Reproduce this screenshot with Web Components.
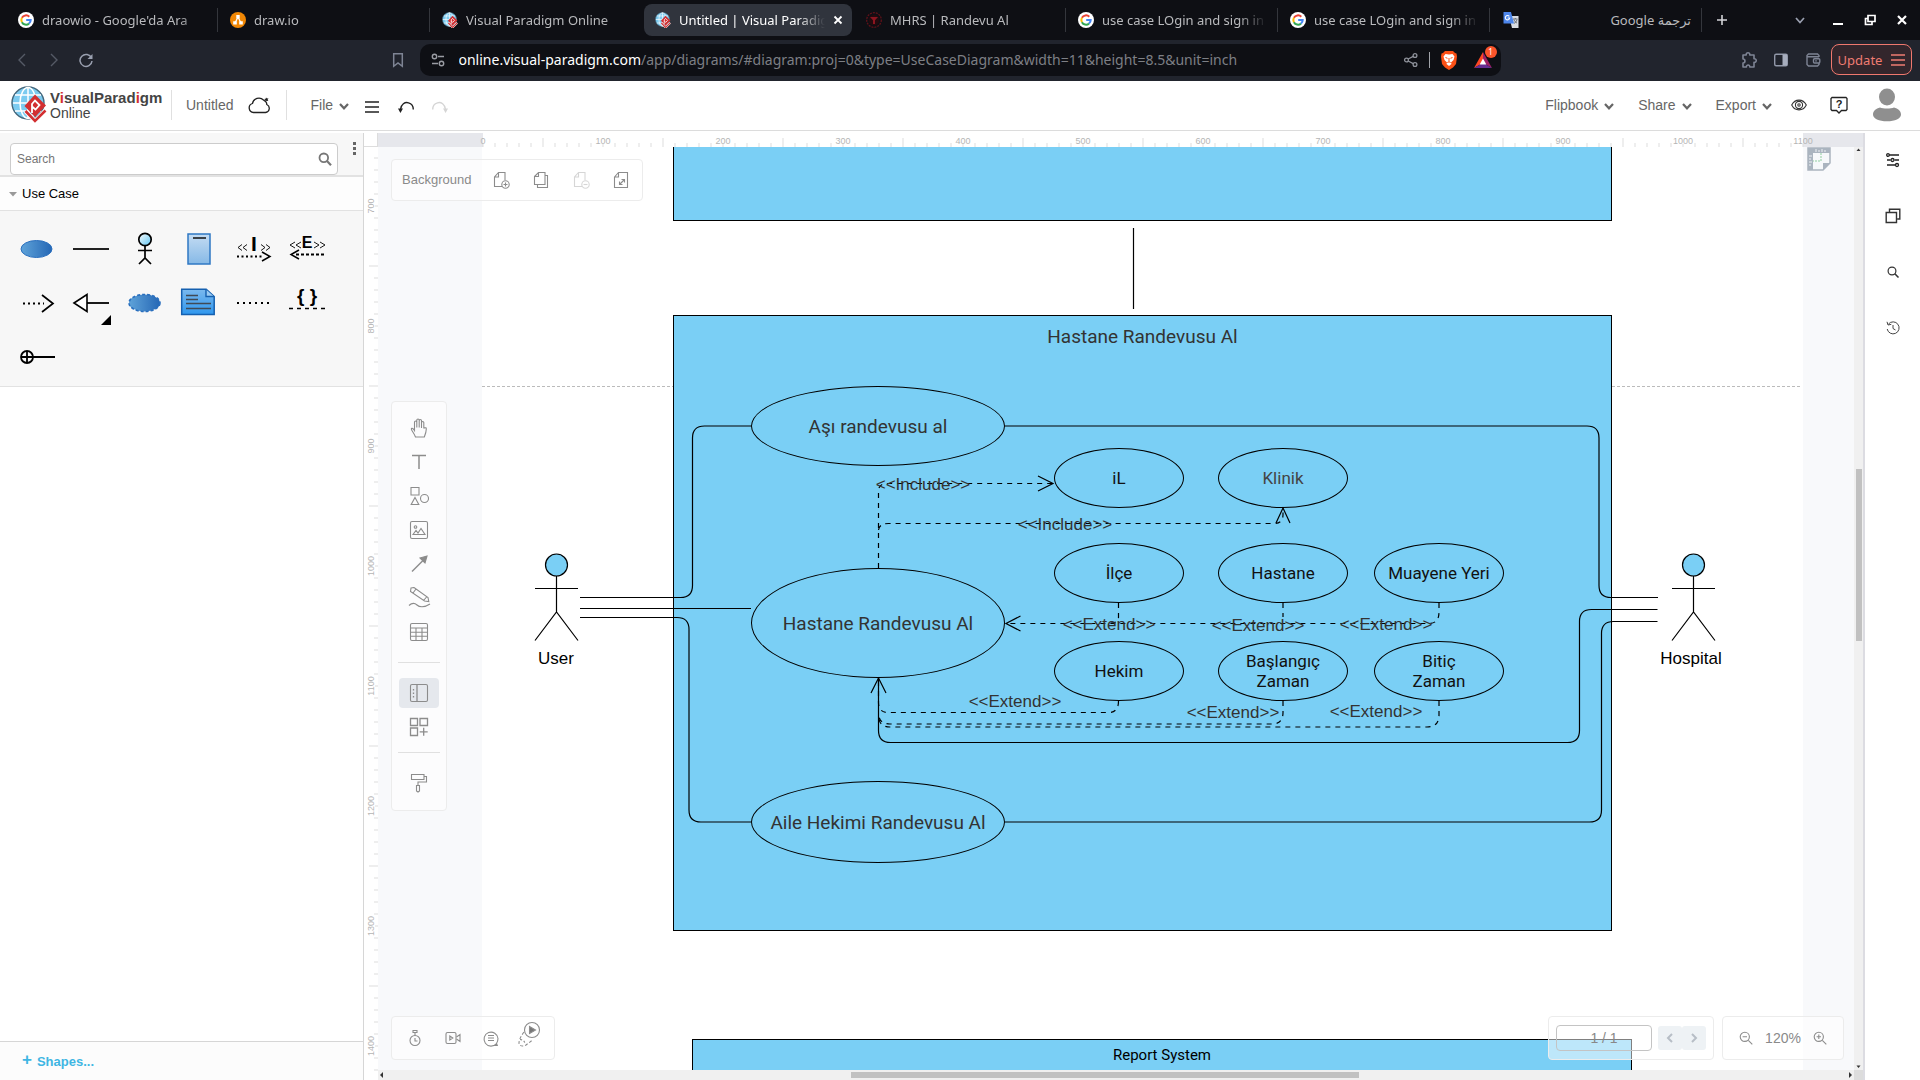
<!DOCTYPE html>
<html lang="en">
<head>
<meta charset="utf-8">
<title>Untitled | Visual Paradigm Online</title>
<style>
  html, body { margin: 0; height: 100%; }
  body { font-family: "Liberation Sans", Arial, sans-serif; overflow: hidden; background: #fff; }
</style>
</head>
<body>
<vp-window></vp-window>
<script>
const G_LOGO = `<circle cx="8" cy="8" r="8" fill="#fff"/>
  <path d="M3.9 5.8A4.7 4.7 0 0 1 11.3 4.7" stroke="#ea4335" stroke-width="2" fill="none"/>
  <path d="M3.9 5.8A4.8 4.8 0 0 0 3.9 10.2" stroke="#fbbc05" stroke-width="2" fill="none"/>
  <path d="M3.9 10.2A4.7 4.7 0 0 0 11 11.6" stroke="#34a853" stroke-width="2" fill="none"/>
  <path d="M11 11.6A4.7 4.7 0 0 0 12.7 8H8.2" stroke="#4285f4" stroke-width="2" fill="none"/>`;
const VP_GLOBE = `<circle cx="17" cy="17" r="16" fill="#7ccbf0" stroke="#44677c" stroke-width="1.4"/>
  <g stroke="#fff" stroke-width="1.5" fill="none"><ellipse cx="17" cy="17" rx="8" ry="15.4"/><path d="M17 1.5v31M2 17h30M4 9h26M4 25h26"/></g>
  <path d="M24 8.500l11 11L24 31 13.500 20z" fill="#d22f31"/>
  <path d="M14.500 25L24 35l10.500-10.500" fill="none" stroke="#fff" stroke-width="4.500"/>
  <path d="M14.500 25L24 35l10.500-10.500" fill="none" stroke="#d22f31" stroke-width="2.600"/>
  <path d="M21 27v-9l3-3.500 4.500 4.500-4 4.500-3.500-3" fill="none" stroke="#fff" stroke-width="1.800"/>`;

/* name: [width, height, markup] */
const ICONS = {
  google: [16, 16, G_LOGO],
  drawio: [16, 16, `<circle cx="8" cy="8" r="8" fill="#f08705"/><path d="M8 5L5 11M8 5l3 6" stroke="#fff" stroke-width="1.200"/><path d="M6.300 3h3.400v3.400H6.300zM3.200 9.300h3.600v3.200H3.200zM9.200 9.300h3.600v3.200H9.200z" fill="#fff"/>`],
  vpsmall: [16, 16, `<g transform="scale(.44)">${VP_GLOBE}</g>`],
  mhrs: [16, 16, `<circle cx="8" cy="8" r="7.300" fill="none" stroke="#5f1119" stroke-width="1.300" stroke-dasharray="2 1"/><circle cx="8" cy="8" r="5.200" fill="#240a0e"/><path d="M4 5h8L9 8.200V12H7V8.200z" fill="#8c1520"/>`],
  translate: [18, 18, `<path d="M7 5h9.500v12H10z" fill="#d9dde3"/><path d="M1.500 1h7.500l3 11.500H1.500z" fill="#4d86ec"/><path d="M7.300 5.400A2.200 2.200 0 1 0 7.700 7H5.700" fill="none" stroke="#fff" stroke-width="1.100"/><path d="M11 8h4.500M13.300 7v1M12 8.500c.5 2 2 3 3 3.500M15 8.500c-.5 2-2 3.500-3 4" stroke="#6a7078" fill="none"/>`],
  close: [10, 10, `<path d="M1.500 1.500l7 7M8.500 1.500l-7 7" stroke="currentColor" stroke-width="1.800"/>`],
  plus: [12, 12, `<path d="M6 1v10M1 6h10" stroke="currentColor" stroke-width="1.600"/>`],
  down: [12, 12, `<path d="M2 4l4 4.500L10 4" fill="none" stroke="currentColor" stroke-width="1.700"/>`],
  min: [12, 12, `<path d="M1 10h10" stroke="#fff" stroke-width="2"/>`],
  restore: [12, 12, `<path d="M4 1.500h7v6H4zM4 4.500H1.500v6H8V8" fill="none" stroke="#fff" stroke-width="1.700"/>`],
  winclose: [12, 12, `<path d="M2 2l8 8M10 2l-8 8" stroke="#fff" stroke-width="2.200"/>`],
  back: [16, 16, `<path d="M11 2L5 8l6 6" fill="none" stroke="#555a66" stroke-width="1.400"/>`],
  fwd: [16, 16, `<path d="M5 2l6 6-6 6" fill="none" stroke="#555a66" stroke-width="1.400"/>`],
  reload: [16, 16, `<path d="M13.500 6A6 6 0 1 0 14 9" fill="none" stroke="#9aa0b0" stroke-width="1.500"/><path d="M14.500 2v5H9.500z" fill="#9aa0b0"/>`],
  bookmark: [16, 16, `<path d="M3.700 1.700h8.600v12.600L8 11l-4.300 3.300z" fill="none" stroke="#7e8494" stroke-width="1.500"/>`],
  tune: [16, 16, `<g fill="none" stroke="#9a9ca3" stroke-width="1.400"><circle cx="4.500" cy="4.500" r="2.200"/><circle cx="11.500" cy="11.500" r="2.200"/><path d="M8 4.500h6M2 11.500h6"/></g>`],
  share: [16, 16, `<g fill="none" stroke="#8f929b" stroke-width="1.300"><circle cx="3.500" cy="8" r="1.900"/><circle cx="12" cy="3.500" r="1.900"/><circle cx="12" cy="12.500" r="1.900"/><path d="M5.200 7l5-2.600M5.200 9l5 2.600"/></g>`],
  brave: [18, 20, `<path d="M5 1h8l2 2 1.500.5.500 3-1 7.500-3 3.500-4 2.500-4-2.500L2 14 1 6.500l.5-3L3 3z" fill="#fb5016"/><path d="M5.500 4l3.500.6 3.500-.6 2 2.500-1 3.500-2.500 2.500.5 1.500L9 16l-2.500-2 .5-1.500L4.500 10l-1-3.500z" fill="#fff"/><path d="M5.500 7.500l2 .8M12.500 7.500l-2 .8M9 8v3.500M7.300 12.500L9 11.800l1.700.7" stroke="#fb5016" fill="none"/>`],
  bat: [18, 16, `<path d="M9 0L0 16l9-5.300z" fill="#ff4724"/><path d="M9 0l9 16-9-5.300z" fill="#9e1f63"/><path d="M0 16h18l-9-5.300z" fill="#662d91"/><path d="M9 6.500l-3.300 6h6.600z" fill="#fff"/>`],
  puzzle: [18, 18, `<path d="M3 4h3.200C5.800 1 10.200 1 9.800 4H14v3.800c3-.4 3 4 0 3.600V16H9.800c.2-2.600-3.600-2.600-3.400 0H3v-4c2.600-.2 2.600-4 0-4z" fill="none" stroke="#7e8494" stroke-width="1.600" stroke-linejoin="round"/>`],
  sidepanel: [16, 16, `<rect x="1.700" y="2.200" width="12.600" height="11.600" rx="1.500" fill="none" stroke="#9197a8" stroke-width="1.400"/><path d="M9.500 2.500H14v11H9.500z" fill="#a7adbd"/>`],
  wallet: [16, 16, `<g fill="none" stroke="#7e8494" stroke-width="1.400"><path d="M14 5V3.500L12.500 2h-9L2 3.500v9L3.500 14h9l1.500-1.500V11M2 4.700h12"/><rect x="8.500" y="6.800" width="6.300" height="4.200" rx="1"/></g><circle cx="11" cy="8.900" r=".8" fill="#7e8494"/>`],
  menu: [14, 14, `<path d="M0 2h14M0 7h14M0 12h14" stroke="currentColor" stroke-width="1.300"/>`],
  logo: [38, 38, VP_GLOBE],
  cloud: [24, 20, `<path d="M6.500 17.500a4.600 4.600 0 0 1-1-9A6.500 6.500 0 0 1 16.500 5l2.300 1.700c.8.800 1 1.800 1 2.800a4.200 4.200 0 0 1-1.300 8z" fill="none" stroke="#222" stroke-width="1.300"/><path d="M19 2.500l1 1 1.500-.2-.8 1.300.6 1.500-1.600-.3-1.300.9-.1-1.600-1.200-1 1.600-.4z" fill="#222"/>`],
  chev: [10, 10, `<path d="M1 3l4 4.300L9 3" fill="none" stroke="currentColor" stroke-width="2.200"/>`],
  burger: [16, 14, `<path d="M1 2h14M1 7h14M1 12h14" stroke="#222" stroke-width="1.500"/>`],
  undo: [18, 18, `<path d="M3.500 11.500C4 6 8 3.800 11.500 4.800c3 .8 4.800 3.500 4.800 6.700" fill="none" stroke="#222" stroke-width="1.400"/><path d="M1 10.500h5L3.400 15z" fill="#222"/>`],
  redo: [18, 18, `<path d="M14.500 11.500C14 6 10 3.800 6.500 4.800c-3 .8-4.800 3.500-4.800 6.700" fill="none" stroke="#d5d5d5" stroke-width="1.400"/><path d="M17 10.500h-5l2.600 4.500z" fill="#d5d5d5"/>`],
  eye: [16, 16, `<g fill="none" stroke="#333" stroke-width="1.100"><path d="M.7 8C4 1.500 12 1.500 15.300 8 12 14.500 4 14.500.7 8z"/><circle cx="8" cy="8" r="3.600"/><circle cx="8" cy="8" r="1.200"/></g>`],
  help: [18, 18, `<path d="M2 1.500h14L17 2.500v11L16 14.500h-4.500L9 17l-2.500-2.500H2L1 13.500V2.500z" fill="none" stroke="#222" stroke-width="1.300"/><text x="9" y="12" font-size="11" font-weight="700" font-family="Liberation Sans" text-anchor="middle" fill="#222">?</text>`],
  avatar: [28, 34, `<ellipse cx="14" cy="9" rx="8" ry="8.500" fill="#8f8f8f"/><path d="M7 19.500c3 1.300 11 1.300 14 0 4 .8 7 3.500 7 7 0 4-6 6.800-14 6.800S0 30.500 0 26.500c0-3.500 3-6.200 7-7z" fill="#8f8f8f"/>`],
  find: [14, 14, `<circle cx="5.800" cy="5.800" r="4.300" fill="none" stroke="#777" stroke-width="1.800"/><path d="M9 9l4 4.200" stroke="#777" stroke-width="2.200"/>`],
  dots: [4, 14, `<path d="M0 0h3v3H0zM0 5h3v3H0zM0 10h3v3H0z" fill="#666"/>`],
  tri: [8, 6, `<path d="M0 1h8L4 5.500z" fill="#999"/>`],
  /* palette */
  p_usecase: [54, 54, `<defs><linearGradient id="g"><stop offset="0" stop-color="#5fa3d9"/><stop offset="1" stop-color="#2567b5"/></linearGradient></defs><ellipse cx="27.500" cy="27" rx="15.500" ry="8.500" fill="url(#g)" stroke="#2a6fbe"/>`],
  p_line: [54, 54, `<path d="M10 27h36" stroke="#222" stroke-width="1.800"/>`],
  p_actor: [54, 54, `<defs><linearGradient id="g" x2="1" y2="1"><stop offset="0" stop-color="#fff"/><stop offset="1" stop-color="#5cc4f2"/></linearGradient></defs><g stroke="#000" stroke-width="1.700" fill="none"><circle cx="28" cy="17.500" r="6.200" fill="url(#g)"/><path d="M28 24v12M21 28.500h14M22 42l6-6 6 6"/></g>`],
  p_system: [54, 54, `<defs><linearGradient id="g" x2="0" y2="1"><stop offset="0" stop-color="#c4dcf3"/><stop offset="1" stop-color="#86b9e6"/></linearGradient></defs><rect x="17" y="12" width="22" height="30" fill="url(#g)" stroke="#2f78c4" stroke-width="1.500"/><path d="M22 16h13" stroke="#111" stroke-width="1.500"/>`],
  p_include: [54, 54, `<g fill="none" stroke="#000" stroke-width=".9"><path d="M17 22.500l-4 3 4 3M22 22.500l-4 3 4 3M36 22.500l4 3-4 3M41 22.500l4 3-4 3"/><path d="M12 34.500h26" stroke-width="1.800" stroke-dasharray="2 2.500"/><path d="M37 30l8 4.500-8 4.500" stroke-width="1.500"/></g><text x="29" y="29" font-size="21" font-weight="700" font-family="Liberation Sans" text-anchor="middle">I</text>`],
  p_extend: [54, 54, `<g fill="none" stroke="#000" stroke-width=".9"><path d="M16 20l-5 3 5 3M22 20l-5 3 5 3M35 20l5 3-5 3M41 20l5 3-5 3"/><path d="M17 32.500h28" stroke-width="1.800" stroke-dasharray="3 2"/><path d="M20 28l-8 4.500 8 4.500" stroke-width="1.500"/></g><text x="28" y="26" font-size="16" font-weight="700" font-family="Liberation Sans" text-anchor="middle">E</text>`],
  p_dep: [54, 54, `<path d="M14 27.500h21" stroke="#000" stroke-width="1.800" stroke-dasharray="2 3"/><path d="M33 19l11 8.500L33 36" fill="none" stroke="#000" stroke-width="1.700"/>`],
  p_gen: [54, 54, `<path d="M11 27l13-8.500v17z" fill="#fff" stroke="#000" stroke-width="1.600"/><path d="M24 27h22" stroke="#000" stroke-width="1.800"/><path d="M48 39v10H38z"/>`],
  p_collab: [54, 54, `<defs><linearGradient id="g"><stop offset="0" stop-color="#5fa3d9"/><stop offset="1" stop-color="#2567b5"/></linearGradient></defs><ellipse cx="27.500" cy="27" rx="15.500" ry="8.500" fill="url(#g)" stroke="#2a6fbe" stroke-width="1.600" stroke-dasharray="3 2"/>`],
  p_note: [54, 54, `<defs><linearGradient id="g" x2="0" y2="1"><stop offset="0" stop-color="#7bb9ee"/><stop offset="1" stop-color="#2f97ee"/></linearGradient></defs><path d="M10.700 13.200h24.500l8 7.300v18H10.700z" fill="url(#g)" stroke="#1560b0" stroke-width="1.500"/><path d="M35 13.500v7h8" fill="#9acbf3" stroke="#1560b0" stroke-width="1.400"/><path d="M15 19.500h12M15 23.500h12M15 27.500h25M15 32.500h25" stroke="#404a55" stroke-width="1.400"/>`],
  p_anchor: [54, 54, `<path d="M12 27h33" stroke="#000" stroke-width="1.800" stroke-dasharray="2 4"/>`],
  p_constraint: [54, 54, `<path d="M10 32.500h36" stroke="#000" stroke-width="1.700" stroke-dasharray="4 4"/><text x="28" y="26" font-size="19" font-weight="700" font-family="Liberation Sans" text-anchor="middle" xml:space="preserve">{ }</text>`],
  p_contain: [54, 54, `<g fill="none" stroke="#000" stroke-width="1.800"><circle cx="18" cy="27" r="6"/><path d="M12 27h34M18 21v12"/></g>`],
  /* canvas tools */
  pageadd: [18, 18, `<path d="M10 15.500H2.500V6l4-4.500H13V9M6.500 1.500V6h-4"/><circle cx="13.500" cy="13.500" r="3.700"/><path d="M11.500 13.500h4M13.500 11.500v4"/>`],
  pagecopy: [18, 18, `<path d="M2.500 5.500l4-4H13v12H2.500zM6.500 1.500v4h-4M13 4.500h2.500v12H5.500v-3"/>`],
  pagedel: [18, 18, `<path d="M10 15.500H2.500V6l4-4.500H13V9M6.500 1.500V6h-4"/><circle cx="13.500" cy="13.500" r="3.700"/><path d="M11.500 13.500h4"/>`],
  pagesize: [18, 18, `<path d="M2.500 6l4-4.500H15.500v15H2.500zM6.500 1.500V6h-4M7.500 13.500l5-5M12.500 11.500v-3h-3M7.500 10.500v3h3"/>`],
  hand: [20, 20, `<path d="M6.500 19C5 15 2.500 12.500 2.300 11c.6-1.400 2-.6 3.200 1.500V4c0-1.300 2.300-1.300 2.300 0v5.500V2c0-1.300 2.400-1.300 2.400 0v7.500V2.500c0-1.300 2.300-1.300 2.300 0v7.500V4.500c0-1.300 2.300-1.300 2.300 0V10c1.500 0 2.500-1 2.500 1 0 3-.8 5-2 8z"/>`],
  text: [20, 20, `<path d="M3 3.500h14M10 3.500V17" stroke-width="1.500"/>`],
  shapes: [20, 20, `<path d="M2 1.500h8v7.500H2zM6 11.500L9.800 18.500H2.200z"/><circle cx="15.500" cy="12.500" r="4"/>`],
  image: [20, 20, `<rect x="1.500" y="1.500" width="17" height="17" rx="1.500"/><circle cx="6.500" cy="7" r="1.300"/><path d="M4 14.500l3-4 2 2.500 3-4.500 4 6z"/>`],
  arrow: [20, 20, `<path d="M3 17.500L14 6.500" stroke-width="1.400"/><path d="M18 2l-2 7-5-5z" fill="#8c8c8c"/>`],
  pencil: [24, 22, `<path d="M4 1l3-.500L21 10.500l.8 4-4.300-.5L3.500 4.500zM16.500 13.500l3.500-4M6 6l3-4M2 18.500c3-3 6-2.500 8-.5s7 3 13-1"/>`],
  table: [20, 20, `<rect x="1.500" y="1.500" width="17" height="17" rx="1.500"/><path d="M1.500 6h17M1.500 10.200h17M1.500 14.300h17M7 6v12.500M13 6v12.500"/>`],
  panel: [20, 20, `<rect x="1.500" y="1.500" width="17" height="17" rx="1.500"/><path d="M8 1.500v17M4.500 6v1.500M4.500 9.500V11M4.500 13v1.500" stroke-width="1.300"/>`],
  widgets: [20, 20, `<path d="M1.500 1.500h7v7h-7zM11 1.500h7.500v7H11zM1.500 11h7v7.500h-7zM14.700 10.800v8M10.700 14.800h8" stroke-width="1.300"/>`],
  roller: [20, 20, `<path d="M2.500 1.500H15v5H2.500zM15 3.500h2.500v5.500H9v3M7.500 12.500h3v5.500l-1.500 1-1.500-1z"/>`],
  timer: [16, 18, `<circle cx="8" cy="11.500" r="5"/><path d="M6 1.500h4v2H6zM8 3.500v3M8 9v3h2.500"/>`],
  video: [18, 16, `<rect x="2" y="2.500" width="10" height="11" rx="1.500"/><path d="M5.800 6l3 2-3 2zM12.500 7l3.500-2.500v7L12.500 9"/>`],
  comment: [18, 18, `<path d="M14.500 14.500A7 7 0 1 1 16 9.500c0 2-.6 3.500-1.500 5l.8 2h-4.500M6 6.500h6M6 9h6M6 11.500h6"/>`],
  present: [26, 32, `<circle cx="16" cy="10" r="7.500"/><path d="M13.500 6.500l6 3.500-6 3.500z" fill="#777"/><path d="M8 12c-3 4-5 8-5 11 0 3 4 4 7 2l6-4.500" stroke-dasharray="3 2"/><path d="M4 19.500c3 0 5 2 5 5" stroke-dasharray="2 2"/>`],
  prev: [12, 12, `<path d="M8 2L4 6l4 4" stroke="#b7bec6" stroke-width="2"/>`],
  next: [12, 12, `<path d="M4 2l4 4-4 4" stroke="#b7bec6" stroke-width="2"/>`],
  zoomout: [14, 14, `<circle cx="5.800" cy="5.800" r="4.600"/><path d="M9.300 9.300l4 4M3.600 5.800H8"/>`],
  zoomin: [14, 14, `<circle cx="5.800" cy="5.800" r="4.600"/><path d="M9.300 9.300l4 4M3.600 5.800H8M5.800 3.600V8"/>`],
  corner: [24, 24, `<path d="M1 1h22v15l-7 7H1z" fill="#f6f8fa" stroke="#aab4bf" stroke-width="1.500"/><path d="M1 1h22v5H6v17H1z" fill="#aab4bf"/><path d="M9 2v3M12 3v2M15 2v3M18 3v2M2 9h3M2 12h2M2 15h3M2 18h2" stroke="#eef1f4"/><path d="M14 6v8H6" fill="none" stroke="#8fcf9f" stroke-dasharray="2 1"/><path d="M23 16h-7v7z" fill="#aab4bf"/>`],
  sliders: [16, 16, `<g fill="none" stroke="#222" stroke-width="1.300"><path d="M4 3h10M2 8h3.500M9.500 8H14M2 13h8"/><circle cx="3" cy="3" r="1.300"/><circle cx="7.500" cy="8" r="1.500"/><circle cx="12" cy="13" r="1.500"/></g>`],
  layers: [16, 16, `<path d="M1.200 4.500h10.300v10H1.200zM4.500 4V1.200h10.300V11h-2.500" fill="none" stroke="#333" stroke-width="1.400"/>`],
  search2: [16, 16, `<circle cx="7" cy="7" r="3.900" fill="none" stroke="#333" stroke-width="1.200"/><path d="M9.800 9.800l3.700 3.700" stroke="#333" stroke-width="1.600"/>`],
  history: [16, 16, `<path d="M3.500 4a6 6 0 1 1-1.300 5M2 1.800L3 5l3.300-.7M8 5v3.500l2.500 1.500" fill="none" stroke="#444"/>`],
  left: [6, 8, `<path d="M5 1v6L2 4z" fill="#333"/>`],
  right: [6, 8, `<path d="M1 1v6l3-3z" fill="#333"/>`],
  up2: [9, 6, `<path d="M2.500 4h4L4.500 1.500z" fill="#333"/>`],
  dn2: [9, 6, `<path d="M2.500 1.500h4L4.500 4z" fill="#333"/>`]
};

class Base extends HTMLElement {
  constructor() { super(); this.attachShadow({ mode: "open" }); }
  connectedCallback() { this.shadowRoot.innerHTML = `<style>*{box-sizing:border-box}button{font:inherit;color:inherit;border:0;background:none;padding:0;margin:0;display:flex;align-items:center;justify-content:center}${this.css()}</style>${this.html()}`; }
  css() { return ":host{display:block}"; }
  html() { return "<slot></slot>"; }
}
const define = (name, css, html) => customElements.define(name, class extends Base {
  css() { return css; }
  html() { return typeof html === "function" ? html(this) : html; }
});

define("vp-icon", ":host{display:block;flex:none}svg{display:block}", el => {
  const [w, h, body] = ICONS[el.getAttribute("name")];
  const tool = el.hasAttribute("tool") ? 'fill="none" stroke="#8c8c8c" stroke-width="1.1"' : "";
  return `<svg width="${w}" height="${h}" viewBox="0 0 ${w} ${h}" aria-hidden="true" ${tool}>${body}</svg>`;
});
const icon = n => `<vp-icon name="${n}"></vp-icon>`;
const tool = n => `<vp-icon name="${n}" tool></vp-icon>`;

/* ---------- browser chrome ---------- */
define("vp-tab", `
  :host{display:flex;flex:0 1 212px;min-width:0;height:32px;color:#b9babd;font:13px/18px "Noto Sans","DejaVu Sans",sans-serif}
  button{flex:1;min-width:0;gap:8px;justify-content:flex-start;padding:0 10px 0 12px;border-radius:8px;position:relative}
  span{flex:1;min-width:0;overflow:hidden;white-space:nowrap;text-align:start;mask-image:linear-gradient(to right,#000 calc(100% - 28px),transparent)}
  :host([sep])::after{content:"";width:1px;height:24px;background:#34363c;align-self:center}
  :host([active]) button{background:#30343d;color:#fff;margin:0 2px;padding:0 9px 0 11px}
  :host([rtl]) span{direction:rtl;mask-image:none}`,
  el => `<button title="${el.textContent}">${icon(el.getAttribute("icon"))}<span><slot></slot></span>${el.hasAttribute("active") ? icon("close") : ""}</button>`);

define("vp-tabs", `
  :host{display:flex;align-items:center;height:40px;background:#0e0f14;padding:0 2px 0 6px;color:#d3d4d8}
  .new{width:32px;height:32px;margin-left:4px}.sp{flex:1}.c{width:32px;height:32px}.list{color:#9aa0b0;margin-right:6px}`,
  `<vp-tab icon="google" sep>draowio - Google'da Ara</vp-tab><vp-tab icon="drawio" sep>draw.io</vp-tab><vp-tab icon="vpsmall">Visual Paradigm Online</vp-tab>
   <vp-tab icon="vpsmall" active>Untitled | Visual Paradigm Online</vp-tab><vp-tab icon="mhrs" sep>MHRS | Randevu Al</vp-tab>
   <vp-tab icon="google" sep>use case LOgin and sign in met</vp-tab><vp-tab icon="google" sep>use case LOgin and sign in met</vp-tab><vp-tab icon="translate" rtl sep>ترجمة Google</vp-tab>
   <button class="new" aria-label="New tab">${icon("plus")}</button><div class="sp"></div>
   <button class="c list" aria-label="Tabs">${icon("down")}</button><button class="c" aria-label="Minimise">${icon("min")}</button><button class="c" aria-label="Restore">${icon("restore")}</button><button class="c" aria-label="Close">${icon("winclose")}</button>`);

define("vp-addressbar", `
  :host{display:grid;grid-template-columns:1fr minmax(0,1081px) 1fr;box-sizing:border-box;height:41px;padding-bottom:2px;align-items:center;background:#21242d;font:14px/20px "Noto Sans",sans-serif}
  .side{display:flex;align-items:center;padding:0 6px}.side button{width:32px;height:32px}.sp{flex:1}
  .bar{display:flex;align-items:center;height:32px;border-radius:10px;background:#0e0f14;padding:0 9px 0 10px}
  .url{flex:1;white-space:nowrap;overflow:hidden;color:#7d7f85;margin-left:13px}.url b{font-weight:400;color:#fff}
  .bar i{width:1px;height:16px;background:#a0a2a8;margin:0 10px}
  .bat{position:relative;margin-left:16px}
  .badge{position:absolute;right:-5px;top:-6px;width:12px;height:12px;border-radius:6px;background:#fb542b;color:#fff;font:8px/12px "Noto Sans",sans-serif;text-align:center}
  .right{justify-content:flex-end;padding-right:8px}
  .right .up{width:81px;height:31px;margin-left:2px;gap:9px;border:1px solid #f0786e;border-radius:8px;background:#33262c;color:#f07c72;font-size:13px}`,
  `<div class="side"><button aria-label="Back">${icon("back")}</button><button aria-label="Forward">${icon("fwd")}</button><button aria-label="Reload">${icon("reload")}</button><div class="sp"></div><button aria-label="Bookmark">${icon("bookmark")}</button></div>
   <div class="bar">${icon("tune")}<div class="url" role="textbox" aria-label="Address"><b>online.visual-paradigm.com</b>/app/diagrams/#diagram:proj=0&amp;type=UseCaseDiagram&amp;width=11&amp;height=8.5&amp;unit=inch</div>
   <button aria-label="Share">${icon("share")}</button><i></i><button aria-label="Shields">${icon("brave")}</button><button class="bat" aria-label="Rewards">${icon("bat")}<span class="badge">1</span></button></div>
   <div class="side right"><button aria-label="Extensions">${icon("puzzle")}</button><button aria-label="Side panel">${icon("sidepanel")}</button><button aria-label="Wallet">${icon("wallet")}</button><button class="up">Update ${icon("menu")}</button></div>`);

/* ---------- application header ---------- */
define("vp-menu", `:host{display:block;color:#666;font-size:14px;line-height:20px}button{gap:6px}vp-icon{margin-top:3px}`,
  `<button><slot></slot>${icon("chev")}</button>`);
define("vp-header", `
  :host{display:flex;align-items:center;height:50px;border-bottom:1px solid #dcdcdc;padding:0 19px 2px 11px;color:#666;font-size:14px;line-height:20px;background:#fff}
  .brand{display:flex;align-items:center;gap:1px;width:161px;height:30px;border-right:1px solid #e0e0e0;color:#444}
  .brand p{margin:0;line-height:14px;display:flex;flex-direction:column}.brand b{font-size:15px;line-height:16px;white-space:nowrap}.brand em{font-style:normal;color:#d22f31}
  .title{margin-left:14px;margin-right:14px}
  .cloud{padding-right:15px;height:30px;border-right:1px solid #e0e0e0;margin-right:23px}
  .burger{margin:4px 17px 0 15px}.undo{margin:4px 16px 0 0}.redo{margin-top:4px}.sp{flex:1}
  .menus{display:flex;gap:24px}.eye{margin:0 23px 0 19px}.help{margin-right:25px}`,
  `<div class="brand">${icon("logo")}<p><b>V<em>i</em>sualParad<em>i</em>gm</b><span>Online</span></p></div>
   <button class="title">Untitled</button><button class="cloud" aria-label="Save">${icon("cloud")}</button><vp-menu>File</vp-menu>
   <button class="burger" aria-label="Menu">${icon("burger")}</button><button class="undo" aria-label="Undo">${icon("undo")}</button><button class="redo" aria-label="Redo">${icon("redo")}</button>
   <div class="sp"></div><div class="menus"><vp-menu>Flipbook</vp-menu><vp-menu>Share</vp-menu><vp-menu>Export</vp-menu></div>
   <button class="eye" aria-label="Preview">${icon("eye")}</button><button class="help" aria-label="Help">${icon("help")}</button><button aria-label="Account">${icon("avatar")}</button>`);

/* ---------- shape palette ---------- */
define("vp-palette", `
  :host{display:flex;flex-direction:column;width:364px;flex:none;border-right:1px solid #d6d6d6;background:#fff;box-sizing:border-box}
  .find{display:flex;height:44px;padding:10px 0 0 10px;background:#f7f7f7;border-bottom:2px solid #e2e2e2}
  label{display:flex;align-items:center;flex:1;height:32px;border:1px solid #ccc;border-radius:4px;background:#fff;padding:0 5px 0 6px}
  input{flex:1;min-width:0;border:0;outline:0;padding:0;font:12px/16px "Liberation Sans",sans-serif;background:none}input::placeholder{color:#767676}
  .find button{width:25px;height:14px;margin-top:-1px;justify-content:flex-end;padding-right:6px}
  h2{margin:0;height:34px;display:flex;align-items:center;gap:5px;padding:0 9px;background:#fdfdfd;border-bottom:1px solid #e2e2e2;font:13px/18px "Liberation Sans",sans-serif;color:#000}
  .grid{display:grid;grid-template-columns:repeat(6,54px);background:#f7f7f7;border-bottom:1px solid #e2e2e2;padding:11px 9px 2px}
  .sp{flex:1}
  footer{height:39px;display:flex;align-items:center;padding:2px 22px 0;border-top:1px solid #d6d6d6;background:#fcfcfc}
  footer button{gap:5px;color:#3fb6e3;font:bold 13px/18px "Liberation Sans",sans-serif}footer b{font-size:17px;margin-top:-4px}`,
  `<div class="find"><label>
     <input type="text" placeholder="Search" aria-label="Search">${icon("find")}</label><button aria-label="More">${icon("dots")}</button></div>
   <h2>${icon("tri")}Use Case</h2>
   <div class="grid">${["usecase","line","actor","system","include","extend","dep","gen","collab","note","anchor","constraint","contain"].map(n => `<button aria-label="${n}">${icon("p_" + n)}</button>`).join("")}</div>
   <div class="sp"></div><footer><button><b>+</b>Shapes...</button></footer>`);

/* ---------- rulers ---------- */
define("vp-ruler", `:host{display:block;overflow:hidden;min-width:0;min-height:0;background:#fff}svg{display:block}text{font:9px "Liberation Sans",sans-serif;fill:#b5b5b5;text-anchor:middle}`,
  el => {
    const vert = el.hasAttribute("vertical"), zero = +el.getAttribute("zero"), from = +el.getAttribute("from"), to = +el.getAttribute("to");
    let s = "";
    for (let v = from; v <= to; v += 10) {
      const p = zero + v * 1.2, big = v % 50 === 0;
      const len = v % 100 === 0 ? 3 : big ? 9 : 4;
      s += vert ? `<path d="M${14 - len} ${p}h${len}"/>` : `<path d="M${p} ${14 - len}v${len}"/>`;
      if (v % 100 === 0) s += vert ? `<text transform="translate(10 ${p}) rotate(-90)">${v}</text>` : `<text x="${p}" y="11">${v}</text>`;
    }
    const off = vert ? "" : `<path d="M0 0h105v14H0zM1425 0h400v14h-400z" fill="#e6e7ec" stroke="none"/>`;
    return `<svg width="${vert ? 14 : 2400}" height="${vert ? 1400 : 14}" stroke="#ddd">${off}<g>${s.replace(/<text/g, '<text stroke="none"')}</g></svg>`;
  });

/* ---------- diagram ---------- */
const SCROLL = { x: 378, y: 147 };
define("uc-case", `
  :host{position:absolute;display:flex;align-items:center;justify-content:center;box-sizing:border-box;border:1px solid #000;border-radius:50%;text-align:center;white-space:nowrap;background:#7acff5;font:17px/20px Roboto,sans-serif;color:#111}
  :host([big]){font-size:19px;color:#333;padding-top:2px}:host([soft]){color:#444}`, el => {
    const [cx, cy, rx, ry] = el.getAttribute("at").split(" ").map(Number);
    Object.assign(el.style, { left: cx - rx - SCROLL.x + "px", top: cy - ry - SCROLL.y + "px", width: rx * 2 + "px", height: ry * 2 + "px" });
    return "<div><slot></slot></div>";
  });
define("uc-system", `
  :host{position:absolute;box-sizing:border-box;border:1px solid #000;background:#7acff5;text-align:center;font:19px/20px Roboto,sans-serif;color:#333;padding-top:11px}
  :host([small]){font-size:15px;line-height:20px;color:#000;padding-top:5px}`, el => {
    const [x, y, w, h] = el.getAttribute("at").split(" ").map(Number);
    Object.assign(el.style, { left: x - SCROLL.x + "px", top: y - SCROLL.y + "px", width: w + "px", height: h + "px" });
    return "<slot></slot>";
  });
define("uc-label", `:host{position:absolute;transform:translate(-50%,-50%);font:17px/20px "Liberation Sans",sans-serif;color:#333;white-space:nowrap}:host([dark]){color:#000}`, el => {
    const [x, y] = el.getAttribute("at").split(" ").map(Number);
    Object.assign(el.style, { left: x - SCROLL.x + "px", top: y - SCROLL.y + "px" });
    return "<slot></slot>";
  });
const actor = x => `<g><circle cx="${x}" cy="565" r="11" fill="#7acff5"/><path d="M${x} 576v36M${x - 21.5} 588.500h43M${x - 21.5} 640.500l21.500-28.500 21.500 28.500"/></g>`;
define("uc-diagram", `:host{display:block;position:absolute;inset:0}svg{position:absolute;left:0;top:0;pointer-events:none}.sheet{position:absolute;left:104px;top:0;bottom:0;width:1321px;background:#fff}.brk{position:absolute;left:104px;top:239px;width:1318px;border-top:1px dashed #bbb}`,
  `<div class="sheet"></div><div class="brk"></div>
   <uc-system at="673 100 939 121"></uc-system>
   <uc-system at="673 315 939 616">Hastane Randevusu Al</uc-system>
   <uc-system small at="692 1039 940 100">Report System</uc-system>
   <uc-case big at="878 426 127 40">Aşı randevusu al</uc-case>
   <uc-case big at="878 623 127 55">Hastane Randevusu Al</uc-case>
   <uc-case big at="878 822 127 41">Aile Hekimi Randevusu Al</uc-case>
   <uc-case at="1119 478 65 30">iL</uc-case><uc-case soft at="1283 478 65 30">Klinik</uc-case>
   <uc-case at="1119 573 65 30">İlçe</uc-case><uc-case at="1283 573 65 30">Hastane</uc-case><uc-case at="1439 573 65 30">Muayene Yeri</uc-case>
   <uc-case at="1119 671 65 30">Hekim</uc-case><uc-case at="1283 671 65 30">Başlangıç<br>Zaman</uc-case><uc-case at="1439 671 65 30">Bitiç<br>Zaman</uc-case>
   <svg width="1480" height="923" viewBox="${SCROLL.x} ${SCROLL.y} 1480 923" fill="none" stroke="#000" stroke-width="1.2">
     <path d="M1133.500 228v81"/>
     <path d="M580 597.500h100.500q12 0 12-12V438q0-12 12-12H751M580 608.500h171M580 617.500h97q12 0 12 12V810q0 12 12 12h50"/>
     <path d="M1005 426h582q12 0 12 12v147.500q0 12 12 12h47M878.500 678v52.500q0 12 12 12h677q12 0 12-12v-109q0-12 12-12h66M1005 822h584.500q12 0 12-12V633.500q0-12 12-12h44"/>
     <g stroke-dasharray="5 5"><path d="M878.500 568v-77q0-7.500 9-7.500H1052M878.500 530q1-6.500 10-6.500H1274q9 0 9-9V509"/>
     <path d="M1439 603v9q0 11.500-10 11.500H1006M1283 603v14M1118.500 603v14q0 6-8 6"/>
     <path d="M1118.500 701q0 11.500-10 11.500H888q-9.500 0-9.500-10V680M1283 701v11.500q0 11.500-11 11.500H890q-11.500 0-11.500-11M1439 701v14q0 12-12 12H890q-11.500 0-11.500-12"/></g>
     <path d="M1038 476l15 7.500-15 7.500M1276 523l7-15 7 15M1020.500 616l-14.500 7.500 14.500 7.500M871 693l7.500-15 7.500 15"/>
     ${actor(556.5)}${actor(1693.5)}
   </svg>
   <uc-label at="923 485">&lt;&lt;Include&gt;&gt;</uc-label><uc-label at="1065 525">&lt;&lt;Include&gt;&gt;</uc-label>
   <uc-label at="1109 625">&lt;&lt;Extend&gt;&gt;</uc-label><uc-label at="1258 626">&lt;&lt;Extend&gt;&gt;</uc-label><uc-label at="1386 625">&lt;&lt;Extend&gt;&gt;</uc-label>
   <uc-label at="1015 702">&lt;&lt;Extend&gt;&gt;</uc-label><uc-label at="1233 713">&lt;&lt;Extend&gt;&gt;</uc-label><uc-label at="1376 712">&lt;&lt;Extend&gt;&gt;</uc-label>
   <uc-label dark at="556 659">User</uc-label><uc-label dark at="1691 659">Hospital</uc-label>`);

/* ---------- floating tool panels ---------- */
const PANEL = `:host{position:absolute;display:flex;align-items:center;box-sizing:border-box;border:1px solid #ececec;border-radius:4px;background:rgba(255,255,255,.5);color:#8a8a8a}`;
define("vp-pagebar", PANEL + `:host{left:13px;top:12px;height:42px;padding:0 11px 0 10px;font-size:13px;line-height:18px}.t{margin-right:20px}.i{width:20px;margin-right:20px}.i:last-child{margin:0}.off{opacity:.35}`,
  `<button class="t">Background</button><button class="i" aria-label="Add page">${tool("pageadd")}</button><button class="i" aria-label="Copy page">${tool("pagecopy")}</button><button class="i off" aria-label="Delete page">${tool("pagedel")}</button><button class="i" aria-label="Page size">${tool("pagesize")}</button>`);
define("vp-toolbox", PANEL + `:host{left:13px;top:254px;width:56px;height:410px;flex-direction:column;padding:11px 1px 0 0}
  button{width:40px;height:30px;margin-bottom:4px;border-radius:4px;flex:none}.on{background:#e5e8ed}hr{width:42px;margin:11px 0 15px;border:0;border-top:1px solid #e0e0e0}hr.b{margin:6px 0 15px}`,
  ["hand","text","shapes","image","arrow","pencil","table"].map(n => `<button aria-label="${n}">${tool(n)}</button>`).join("") +
  `<hr><button class="on" aria-label="panel">${tool("panel")}</button><button aria-label="widgets">${tool("widgets")}</button><hr class="b"><button aria-label="format">${tool("roller")}</button>`);
define("vp-mediabar", PANEL + `:host{left:13px;bottom:10px;height:44px;width:164px;padding:0 4px}button{width:38px;height:38px}button:last-child{padding-bottom:4px}`,
  ["timer","video","comment","present"].map(n => `<button aria-label="${n}">${tool(n)}</button>`).join(""));
define("vp-pager", PANEL + `:host{right:140px;bottom:10px;height:44px;width:166px;padding:0 7px}
  input{width:96px;height:26px;border:1px solid #c4c4c4;border-radius:4px;background:transparent;text-align:center;font:14px/20px "Liberation Sans",sans-serif;color:#888;padding:0;margin-right:6px}
  button{width:24px;height:24px;border-radius:3px;background:#eef2f5}`,
  `<input type="text" value="1 / 1" aria-label="Page"><button aria-label="Previous page">${tool("prev")}</button><button aria-label="Next page">${tool("next")}</button>`);
define("vp-zoom", PANEL + `:host{right:10px;bottom:10px;height:44px;width:122px;padding:0 16px;justify-content:space-between;font-size:14px;line-height:20px}`,
  `<button aria-label="Zoom out">${tool("zoomout")}</button><span>120%</span><button aria-label="Zoom in">${tool("zoomin")}</button>`);

/* ---------- scrollbars ---------- */
define("vp-scroll", `
  :host{display:flex;align-items:center;background:#f0f0f0}:host([vertical]){flex-direction:column}
  .a{flex:var(--before) 1 0}.t{flex:var(--thumb) 1 0;background:#c1c1c1;height:6px}.b{flex:var(--after) 1 0}
  :host([vertical]) .t{width:6px;height:auto}`,
  el => el.hasAttribute("vertical") ? `${icon("up2")}<div class="a"></div><div class="t"></div><div class="b"></div>${icon("dn2")}` : `${icon("left")}<div class="a"></div><div class="t"></div><div class="b"></div>${icon("right")}`);

define("vp-canvas", `
  :host{flex:1;min-width:0;display:grid;grid-template-columns:14px minmax(0,1fr) 9px;grid-template-rows:14px minmax(0,1fr) 10px}
  .corner{border-bottom:1px solid #ddd;border-right:1px solid #ddd}
  .h{grid-column:2/4}.v{grid-row:2/4}
  .view{position:relative;overflow:hidden;background:#f8f9fb}
  .sheeticon{position:absolute;right:23px;top:0}
  .hs{--before:469;--thumb:509;--after:491}.vs{--before:316;--thumb:172;--after:423}.end{background:#dcdcdc}`,
  `<div class="corner"></div><vp-ruler class="h" zero="105" from="0" to="1100"></vp-ruler>
   <vp-ruler class="v" vertical zero="-781" from="660" to="1420"></vp-ruler>
   <div class="view"><uc-diagram></uc-diagram><div class="sheeticon">${icon("corner")}</div><vp-pagebar></vp-pagebar><vp-toolbox></vp-toolbox><vp-mediabar></vp-mediabar><vp-pager></vp-pager><vp-zoom></vp-zoom></div>
   <vp-scroll class="vs" vertical></vp-scroll><vp-scroll class="hs"></vp-scroll><div class="end"></div>`);

define("vp-rail", `:host{display:flex;flex-direction:column;align-items:center;gap:24px;width:57px;box-sizing:border-box;flex:none;border-left:2px solid #dcdce2;padding-top:11px;background:#fff}button{width:32px;height:32px}`,
  ["sliders","layers","search2","history"].map(n => `<button aria-label="${n}">${icon(n)}</button>`).join(""));

define("vp-window", `:host{display:flex;flex-direction:column;height:100vh}main{flex:1;display:flex;min-height:0;padding-top:2px}`,
  `<vp-tabs></vp-tabs><vp-addressbar></vp-addressbar><vp-header></vp-header><main><vp-palette></vp-palette><vp-canvas></vp-canvas><vp-rail></vp-rail></main>`);
</script>
</body>
</html>
